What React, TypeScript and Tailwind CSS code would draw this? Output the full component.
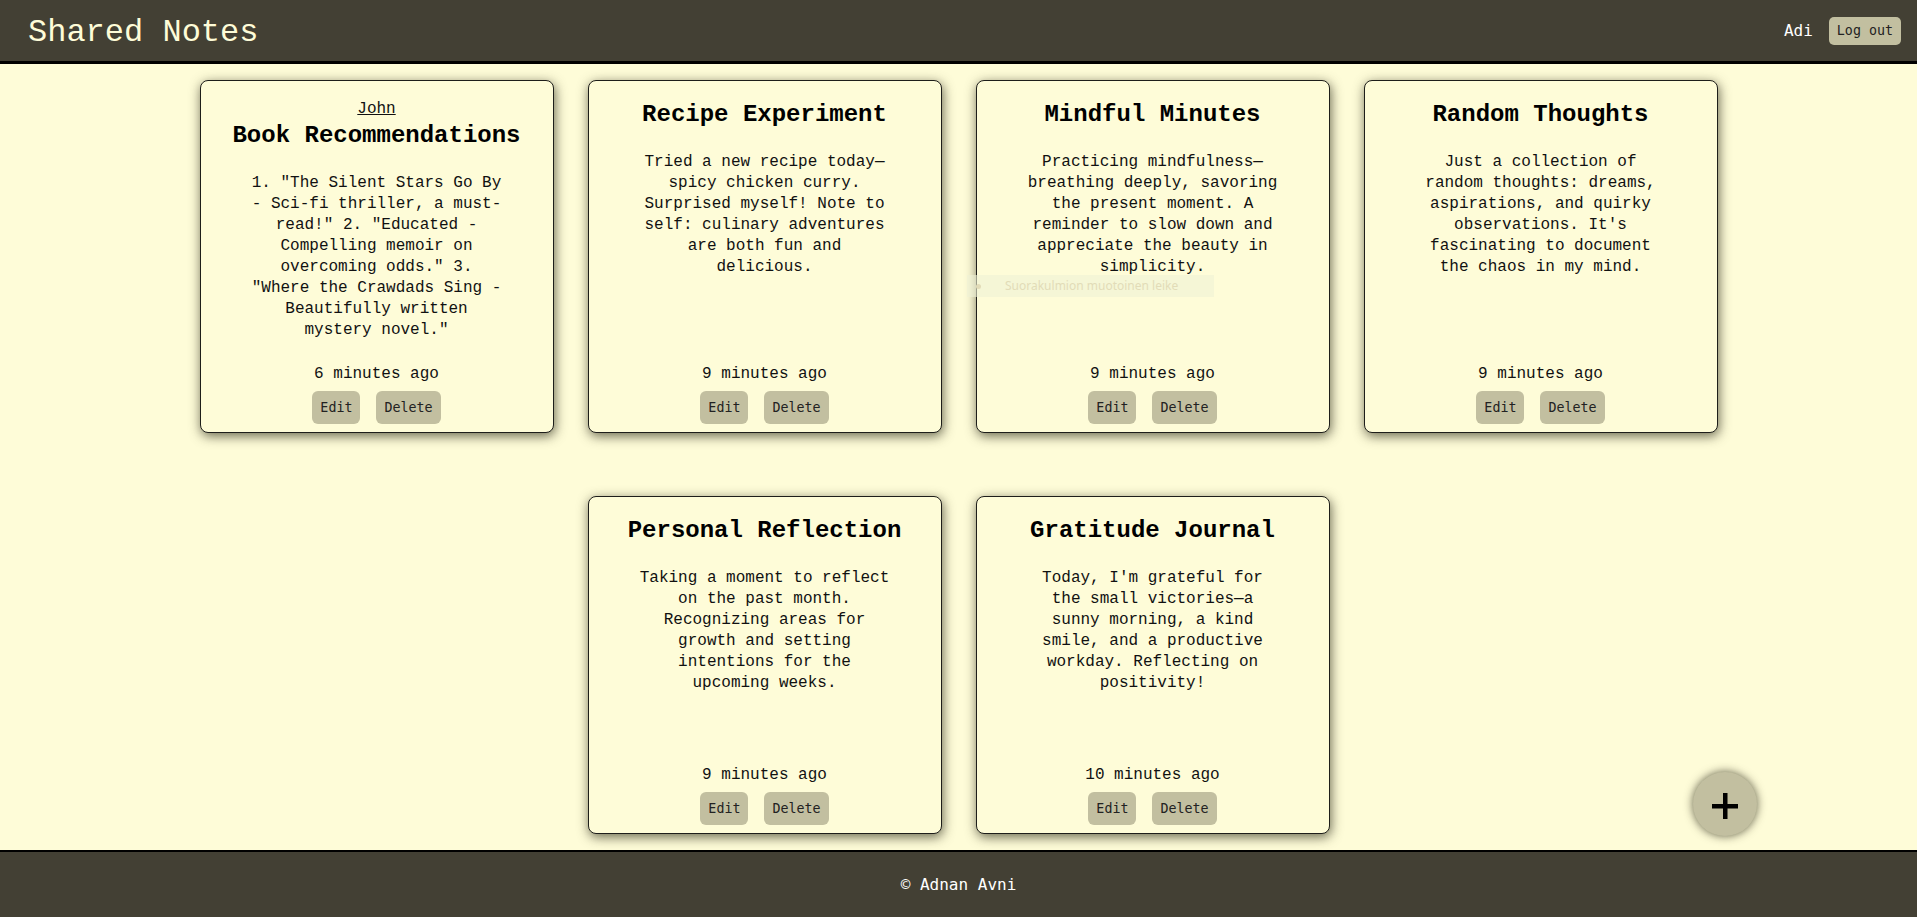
import React from "react";

type Note = {
  id: number;
  author?: string;
  title: string;
  body: string;
  ago: string;
};

const notes: Note[] = [
  {
    id: 1,
    author: "John",
    title: "Book Recommendations",
    body: '1. "The Silent Stars Go By - Sci-fi thriller, a must-read!" 2. "Educated - Compelling memoir on overcoming odds." 3. "Where the Crawdads Sing - Beautifully written mystery novel."',
    ago: "6 minutes ago",
  },
  {
    id: 2,
    title: "Recipe Experiment",
    body: "Tried a new recipe today\u2014spicy chicken curry. Surprised myself! Note to self: culinary adventures are both fun and delicious.",
    ago: "9 minutes ago",
  },
  {
    id: 3,
    title: "Mindful Minutes",
    body: "Practicing mindfulness\u2014breathing deeply, savoring the present moment. A reminder to slow down and appreciate the beauty in simplicity.",
    ago: "9 minutes ago",
  },
  {
    id: 4,
    title: "Random Thoughts",
    body: "Just a collection of random thoughts: dreams, aspirations, and quirky observations. It's fascinating to document the chaos in my mind.",
    ago: "9 minutes ago",
  },
  {
    id: 5,
    title: "Personal Reflection",
    body: "Taking a moment to reflect on the past month. Recognizing areas for growth and setting intentions for the upcoming weeks.",
    ago: "9 minutes ago",
  },
  {
    id: 6,
    title: "Gratitude Journal",
    body: "Today, I'm grateful for the small victories\u2014a sunny morning, a kind smile, and a productive workday. Reflecting on positivity!",
    ago: "10 minutes ago",
  },
];

const mono = "font-['Liberation_Mono',_'DejaVu_Sans_Mono',_monospace]";
const sysMono = "font-['DejaVu_Sans_Mono',_monospace]";

function NoteCard({ note }: { note: Note }) {
  return (
    <div className="flex w-[354px] min-h-[338px] flex-col items-center rounded-lg border border-[#1e1e1a] bg-[#fefcd8] px-4 pt-[18px] pb-2 text-center text-[#111] shadow-[1px_3px_12px_rgba(40,38,20,0.7)]">
      {note.author && (
        <a className="text-base leading-[21px] underline">{note.author}</a>
      )}
      <h2 className="text-2xl font-bold leading-8 text-black">{note.title}</h2>
      <p className="mt-[21px] w-[256px] text-base leading-[21px]">{note.body}</p>
      <div className="mt-auto flex flex-col items-center pt-[23px]">
        <span className="text-base leading-[21px]">{note.ago}</span>
        <div className="mt-[6px] flex gap-4">
          <button className={`h-[33px] rounded-md bg-[#c2bfa0] px-2 text-[13.33px] text-[#222] ${sysMono}`}>
            Edit
          </button>
          <button className={`h-[33px] rounded-md bg-[#c2bfa0] px-2 text-[13.33px] text-[#222] ${sysMono}`}>
            Delete
          </button>
        </div>
      </div>
    </div>
  );
}

export default function App() {
  return (
    <div className={`relative flex min-h-screen flex-col bg-[#fefcd8] ${mono}`}>
      <header className="flex h-[64px] items-center justify-between border-b-[3px] border-black bg-[#434034] pl-[28px] pr-4">
        <h1 className="mt-1 text-[32px] leading-none text-[#fefcd8]">Shared Notes</h1>
        <div className={`flex items-center gap-4 ${sysMono}`}>
          <span className="text-base text-white">Adi</span>
          <button className="h-[28px] rounded-[5px] bg-[#c2bfa0] px-2 text-[13.33px] text-[#222]">
            Log out
          </button>
        </div>
      </header>

      <main className="flex-1 pt-4 pb-4">
        <div className="mx-auto flex max-w-[1560px] flex-wrap justify-center gap-x-[34px] gap-y-[63px]">
          {notes.map((n) => (
            <NoteCard key={n.id} note={n} />
          ))}
        </div>
      </main>

      <footer className={`flex h-[67px] items-center justify-center border-t-2 border-black bg-[#434034] text-base text-white ${sysMono}`}>
        © Adnan Avni
      </footer>

      <button className="fixed right-[160px] bottom-[81px] flex h-16 w-16 items-center justify-center rounded-full bg-[#c2bfa0] shadow-[0_0_10px_rgba(40,38,20,0.75)]">
        <svg width="26" height="26" viewBox="0 0 26 26" className="mt-1">
          <rect x="11" y="0" width="4.5" height="26" fill="#000" />
          <rect x="0" y="11" width="26" height="4.5" fill="#000" />
        </svg>
      </button>

      <div className="pointer-events-none absolute left-[967px] top-[275px] flex h-[22px] w-[247px] items-center gap-3 bg-[#eef2d6]/60 pl-[9px] font-['Noto_Sans',_sans-serif] text-[12px] text-[#e2dcb8]">
        <span className="h-[5px] w-[5px] rounded-full bg-[#e2dcb8]" />
        <span className="ml-3">Suorakulmion muotoinen leike</span>
      </div>
    </div>
  );
}
